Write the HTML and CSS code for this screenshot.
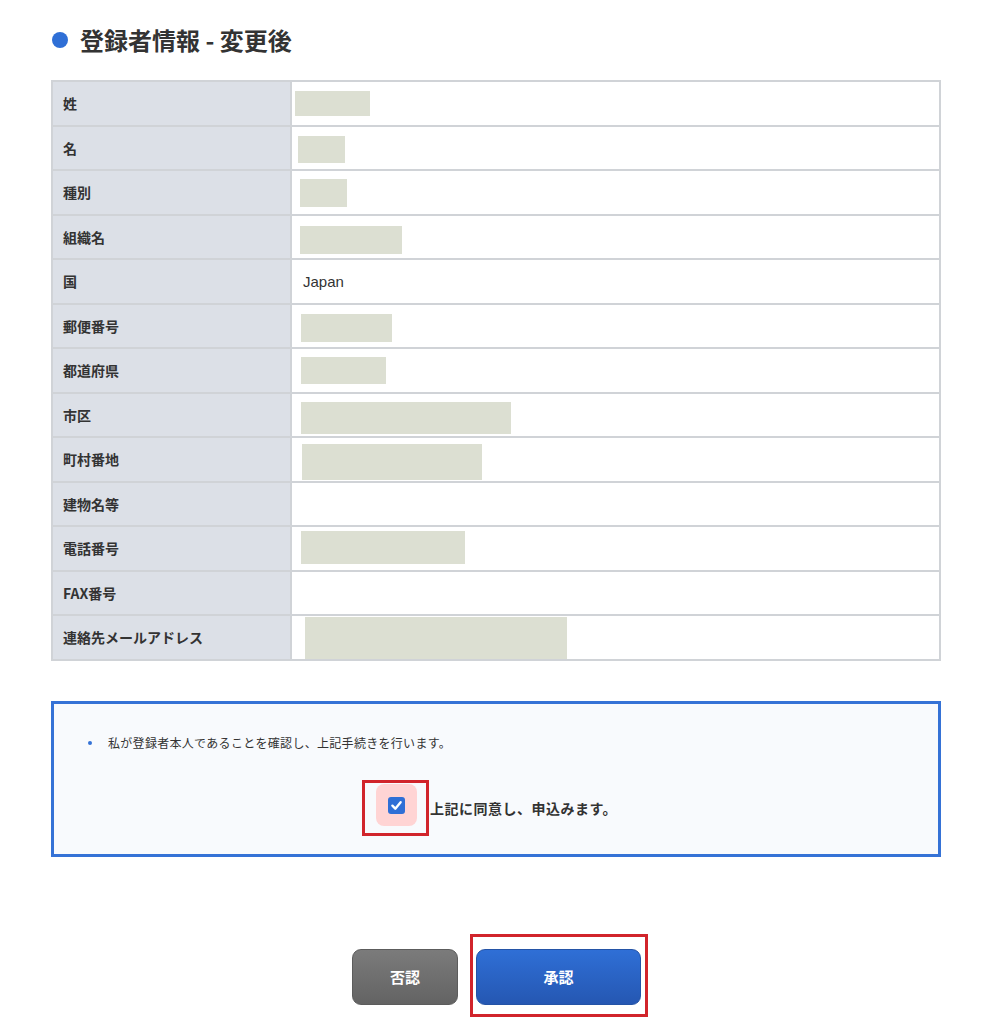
FILE: index.html
```html
<!DOCTYPE html>
<html lang="ja">
<head>
    <meta charset="UTF-8">
    <meta name="viewport" content="width=device-width, initial-scale=1.0">
    <title>登録者情報 - 変更後</title>
    <link rel="stylesheet" href="styles.css">
</head>
<body>
<div class="page">
    <h1 class="title"><span class="dot"></span>登録者情報 - 変更後</h1>

    <div class="info">
        <div class="row">
            <div class="label">姓</div>
            <div class="value"><span class="masked" style="margin:9px 0 0 3px;width:75px;height:25px"></span></div>
        </div>
        <div class="row">
            <div class="label">名</div>
            <div class="value"><span class="masked" style="margin:9px 0 0 6px;width:47px;height:27px"></span></div>
        </div>
        <div class="row">
            <div class="label">種別</div>
            <div class="value"><span class="masked" style="margin:8px 0 0 8px;width:47px;height:28px"></span></div>
        </div>
        <div class="row">
            <div class="label">組織名</div>
            <div class="value"><span class="masked" style="margin:10px 0 0 8px;width:102px;height:28px"></span></div>
        </div>
        <div class="row">
            <div class="label">国</div>
            <div class="value"><span class="text">Japan</span></div>
        </div>
        <div class="row">
            <div class="label">郵便番号</div>
            <div class="value"><span class="masked" style="margin:9px 0 0 9px;width:91px;height:28px"></span></div>
        </div>
        <div class="row">
            <div class="label">都道府県</div>
            <div class="value"><span class="masked" style="margin:8px 0 0 9px;width:85px;height:27px"></span></div>
        </div>
        <div class="row">
            <div class="label">市区</div>
            <div class="value"><span class="masked" style="margin:8px 0 0 9px;width:210px;height:32px"></span></div>
        </div>
        <div class="row">
            <div class="label">町村番地</div>
            <div class="value"><span class="masked" style="margin:6px 0 0 10px;width:180px;height:36px"></span></div>
        </div>
        <div class="row">
            <div class="label">建物名等</div>
            <div class="value"></div>
        </div>
        <div class="row">
            <div class="label">電話番号</div>
            <div class="value"><span class="masked" style="margin:4px 0 0 9px;width:164px;height:33px"></span></div>
        </div>
        <div class="row">
            <div class="label">FAX番号</div>
            <div class="value"></div>
        </div>
        <div class="row">
            <div class="label">連絡先メールアドレス</div>
            <div class="value"><span class="masked" style="margin:1px 0 0 13px;width:262px;height:42px"></span></div>
        </div>
    </div>

    <div class="agree">
        <div class="note"><span class="bullet"></span>私が登録者本人であることを確認し、上記手続きを行います。</div>
        <div class="check-row">
            <span class="mark">
                <span class="check-bg">
                    <span class="check">
                        <svg width="13" height="13" viewBox="0 0 12 12"><path d="M2.2 6.2 L4.9 8.9 L9.8 3" fill="none" stroke="#fff" stroke-width="2.2" stroke-linecap="round" stroke-linejoin="round"/></svg>
                    </span>
                </span>
            </span>
            <span class="check-label">上記に同意し、申込みます。</span>
        </div>
    </div>

    <div class="actions">
        <button class="btn btn-deny">否認</button>
        <span class="mark mark-btn"><button class="btn btn-ok">承認</button></span>
    </div>
</div>
</body>
</html>
```

FILE: styles.css
```css
body {
  margin: 0;
  background: #fff;
  color: #333;
  font-family: "Noto Sans CJK JP", "Noto Sans", sans-serif;
}

.page {
  padding: 24px 46px 0 51px;
}

.title {
  display: flex;
  align-items: center;
  gap: 12px;
  margin: 0 0 24px 1px;
  font-size: 24px;
  line-height: 32px;
  font-weight: bold;
  color: #333;
}

.dot {
  width: 16px;
  height: 16px;
  border-radius: 50%;
  background: #2f6fd6;
}

/* table of fields */
.info {
  border: 2px solid #d0d3d7;
  border-top: 0;
}

.row {
  display: flex;
  height: 44.5px;
  box-sizing: border-box;
  border-top: 2px solid #d0d3d7;
}

.label {
  width: 239px;
  box-sizing: border-box;
  padding-left: 10px;
  border-right: 2px solid #d0d3d7;
  background: #dce0e7;
  display: flex;
  align-items: center;
  font-size: 14px;
  font-weight: bold;
  color: #333;
}

.value {
  flex: 1;
  display: flex;
  align-items: center;
  background: #fff;
}

.value .text {
  margin-left: 11px;
  font-family: "Liberation Sans", Arial, sans-serif;
  font-size: 15px;
  color: #333;
}

.masked {
  align-self: flex-start;
  display: block;
  background: #dcdfd2;
}

/* agreement box */
.agree {
  margin-top: 40px;
  border: 3px solid #3572d6;
  background: #f8fafd;
  padding: 30px 0 18px;
}

.note {
  display: flex;
  align-items: center;
  gap: 16px;
  padding-left: 34px;
  font-size: 12px;
  line-height: 18px;
  letter-spacing: 0.3px;
  color: #333;
}

.bullet {
  width: 4px;
  height: 4px;
  border-radius: 50%;
  background: #3572d6;
}

.check-row {
  margin-top: 28px;
  display: flex;
  justify-content: center;
  align-items: center;
  padding-right: 13px;
}

.mark {
  display: inline-block;
  border: 3px solid #d1242b;
}

.check-row .mark {
  padding: 1px 9px 7px 11px;
}

.check-bg {
  width: 41px;
  height: 42px;
  border-radius: 8px;
  background: #ffd4d4;
  display: flex;
  align-items: center;
  justify-content: center;
}

.check {
  width: 17px;
  height: 17px;
  border-radius: 3px;
  background: #2f6fd6;
  display: flex;
  align-items: center;
  justify-content: center;
  margin-top: 2px;
}

.check-label {
  margin-left: 1px;
  font-size: 14px;
  font-weight: bold;
  letter-spacing: 0.5px;
  color: #333;
}

/* buttons */
.actions {
  margin-top: 77px;
  display: flex;
  justify-content: center;
  align-items: flex-end;
  gap: 12px;
  padding-left: 8px;
}

.mark-btn {
  padding: 12px 4px 9px 3px;
  line-height: 0;
}

.btn {
  height: 56px;
  border-radius: 9px;
  font-family: "Noto Sans CJK JP", sans-serif;
  font-size: 15px;
  font-weight: bold;
  color: #fff;
  cursor: pointer;
}

.btn-deny {
  width: 106px;
  margin-bottom: 12px;
  border: 1px solid #5c5c5c;
  background: linear-gradient(#7b7b7b, #636363);
}

.btn-ok {
  width: 165px;
  border: 1px solid #2453a6;
  background: linear-gradient(#2f6fd6, #2557b2);
}
```
